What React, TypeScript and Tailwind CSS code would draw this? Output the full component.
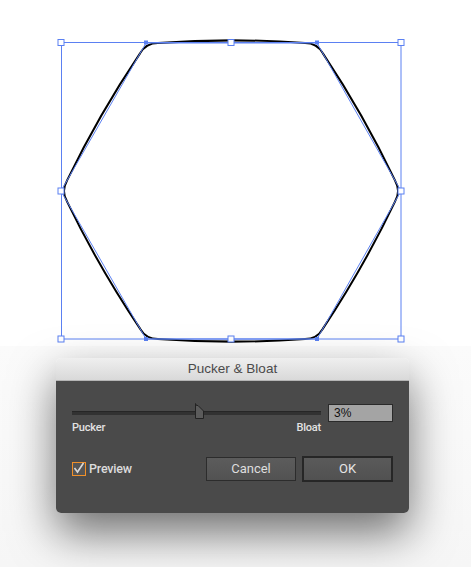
import React from 'react';

const VERTS: [number, number][] = [
  [146, 43],
  [317, 43],
  [401, 191],
  [317, 339],
  [146, 339],
  [61, 191],
];
const CENTER: [number, number] = [231, 191];

// bloated outline: rounded corners pulled in, edges pushed out a little
const bloatPath = () => {
  const t = 0.07;
  const n = VERTS.length;
  const pin = (i: number) => {
    const v = VERTS[i];
    const p = VERTS[(i - 1 + n) % n];
    return [v[0] + (p[0] - v[0]) * t, v[1] + (p[1] - v[1]) * t];
  };
  const pout = (i: number) => {
    const v = VERTS[i];
    const q = VERTS[(i + 1) % n];
    return [v[0] + (q[0] - v[0]) * t, v[1] + (q[1] - v[1]) * t];
  };
  const f = (x: number) => x.toFixed(2);
  let d = `M${f(pout(0)[0])},${f(pout(0)[1])}`;
  for (let i = 0; i < n; i++) {
    const a = pout(i);
    const j = (i + 1) % n;
    const b = pin(j);
    const mx = (a[0] + b[0]) / 2 - CENTER[0];
    const my = (a[1] + b[1]) / 2 - CENTER[1];
    const len = Math.hypot(mx, my);
    const nx = (mx / len) * 3.5;
    const ny = (my / len) * 3.5;
    const c1 = [a[0] + (b[0] - a[0]) / 3 + nx, a[1] + (b[1] - a[1]) / 3 + ny];
    const c2 = [a[0] + ((b[0] - a[0]) * 2) / 3 + nx, a[1] + ((b[1] - a[1]) * 2) / 3 + ny];
    d += ` C${f(c1[0])},${f(c1[1])} ${f(c2[0])},${f(c2[1])} ${f(b[0])},${f(b[1])}`;
    const v = VERTS[j];
    const o = pout(j);
    d += ` Q${f(v[0])},${f(v[1])} ${f(o[0])},${f(o[1])}`;
  }
  return d + ' Z';
};

const BLUE = '#5b80f2';

const Canvas: React.FC = () => {
  const hollow: [number, number][] = [
    [61, 42.5], [231, 42.5], [401, 42.5],
    [61, 191], [401, 191],
    [61, 339], [231, 339], [401, 339],
  ];
  const solid: [number, number][] = [
    [146, 42.5], [317, 42.5], [146, 339], [317, 339],
  ];
  return (
    <svg width={471} height={346} viewBox="0 0 471 346" className="block shrink-0">
      <path d={bloatPath()} fill="none" stroke="#000" strokeWidth={2} />
      <polygon
        points={VERTS.map((p) => p.join(',')).join(' ')}
        fill="none"
        stroke={BLUE}
        strokeWidth={1}
      />
      <rect x={61.5} y={42.5} width={339.5} height={296.5} fill="none" stroke={BLUE} strokeWidth={1} />
      {hollow.map(([x, y], i) => (
        <rect key={i} x={x - 3} y={y - 3} width={6} height={6} fill="#fff" stroke={BLUE} strokeWidth={1} />
      ))}
      {solid.map(([x, y], i) => (
        <rect key={i} x={x - 2} y={y - 2} width={4} height={4} fill={BLUE} />
      ))}
    </svg>
  );
};

const labelFont = { fontFamily: 'Roboto, "Liberation Sans", sans-serif' };

const PuckerDialog: React.FC = () => (
  <div className="w-[353px] h-[155px] rounded-[5px] shadow-[0_20px_45px_rgba(0,0,0,0.55)] flex flex-col overflow-hidden">
    <div className="h-[23px] shrink-0 bg-gradient-to-b from-[#efefef] to-[#d9d9d9] border-b border-[#b5b5b5] flex items-center justify-center">
      <span
        className="text-[13.5px] text-[#4a4a4a] leading-none"
        style={{ fontFamily: '"Liberation Sans", Arial, sans-serif' }}
      >
        Pucker &amp; Bloat
      </span>
    </div>

    <div className="flex-1 bg-[#4a4a4a] px-[16px] pt-[23px] flex flex-col">
      <div className="flex items-start justify-between">
        <div className="w-[249px] flex flex-col">
          <div className="relative mt-[7px] h-[4px] bg-[#323232] border-t border-[#262626]">
            <svg
              width={11}
              height={17}
              viewBox="0 0 11 17"
              className="absolute left-[122px] top-[-9px]"
            >
              <path
                d="M1.5 0.5 L1.5 5 L1.5 15.5 L9.5 15.5 L9.5 8 L4 2.5 L2.5 2.5 Z"
                fill="#5b5b5b"
                stroke="#222"
                strokeWidth={1}
              />
            </svg>
          </div>
          <div
            className="mt-[6px] flex justify-between text-[11px] leading-[13px] font-medium text-[#e2e2e2] tracking-[-0.2px]"
            style={labelFont}
          >
            <span>Pucker</span>
            <span>Bloat</span>
          </div>
        </div>
        <div
          className="w-[65px] h-[18px] bg-[#a4a4a4] border border-[#2a2a2a] pl-[5px] flex items-center text-[12px] text-[#111]"
          style={{ fontFamily: '"Liberation Sans", Arial, sans-serif' }}
        >
          3%
        </div>
      </div>

      <div className="mt-[22px] flex items-center h-[26px]">
        <div className="flex items-center">
          <div className="w-[14px] h-[14px] border border-[#f0902a] bg-[#555] relative">
            <svg width={14} height={14} viewBox="0 0 14 14" className="absolute left-[-1px] top-[-2px]">
              <path d="M2.5 7 L5.5 11 L11.5 2" fill="none" stroke="#d8d8d8" strokeWidth={1.6} />
            </svg>
          </div>
          <span
            className="ml-[3px] text-[12.5px] font-medium text-[#dcdcdc] tracking-[-0.2px]"
            style={labelFont}
          >
            Preview
          </span>
        </div>
        <div className="ml-auto flex items-center gap-[6px]">
          <button
            className="w-[90px] h-[24px] border border-[#2c2c2c] bg-gradient-to-b from-[#5c5c5c] to-[#525252] text-[13px] text-[#dedede]"
            style={labelFont}
          >
            Cancel
          </button>
          <button
            className="w-[91px] h-[26px] border-2 border-[#262626] bg-gradient-to-b from-[#5a5a5a] to-[#515151] text-[13px] text-[#e6e6e6]"
            style={labelFont}
          >
            OK
          </button>
        </div>
      </div>
    </div>
  </div>
);

export default function App() {
  return (
    <div className="w-[471px] h-[567px] bg-white flex flex-col overflow-hidden">
      <Canvas />
      <div className="flex-1 bg-gradient-to-b from-[#fbfbfb] to-[#f6f6f6] pt-[12px] pl-[56px]">
        <PuckerDialog />
      </div>
    </div>
  );
}
